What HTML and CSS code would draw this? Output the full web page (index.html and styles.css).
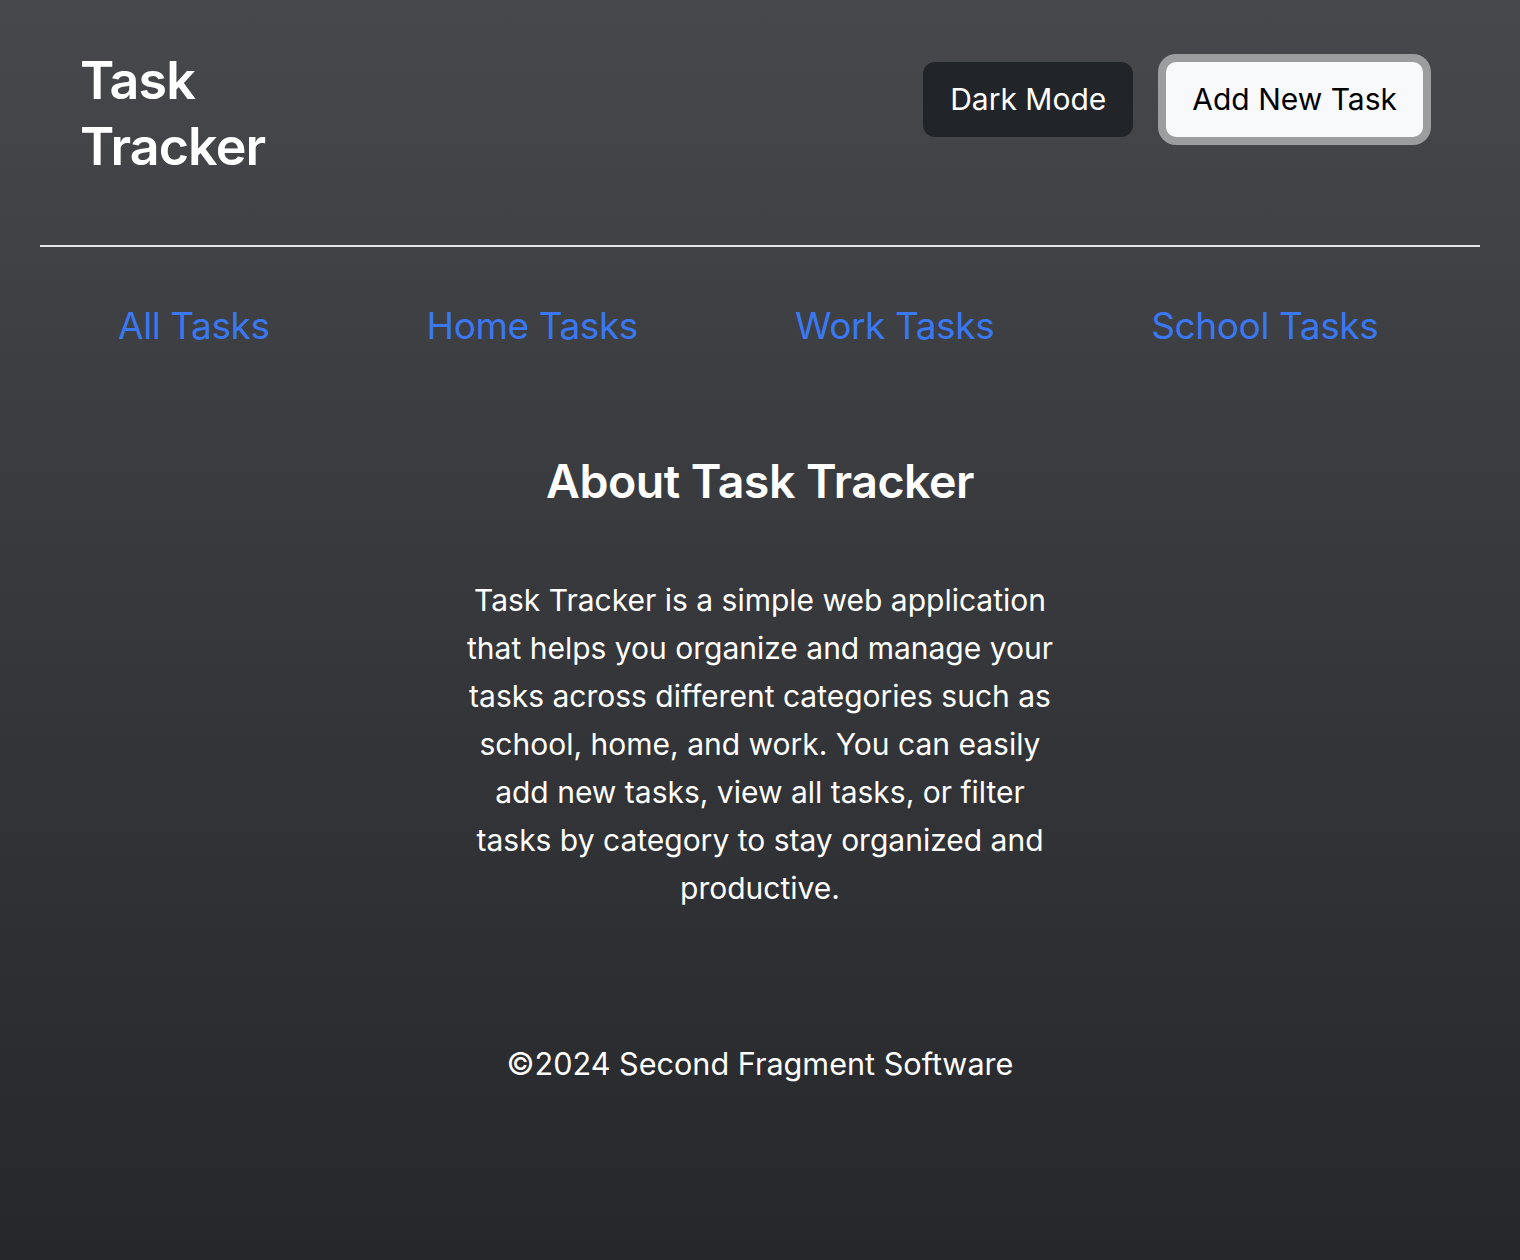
FILE: index.html
```html
<!DOCTYPE html>
<html lang="en">
<head>
<meta charset="utf-8">
<title>Task Tracker</title>
<link rel="stylesheet" href="styles.css">
</head>
<body>
<div class="app">
  <header class="header">
    <h1 class="brand">Task<br>Tracker</h1>
    <div class="actions">
      <button class="btn btn-dark">Dark Mode</button>
      <button class="btn btn-light">Add New Task</button>
    </div>
  </header>
  <hr class="divider">
  <nav class="nav">
    <a href="#" class="nav-link">All Tasks</a>
    <a href="#" class="nav-link">Home Tasks</a>
    <a href="#" class="nav-link">Work Tasks</a>
    <a href="#" class="nav-link">School Tasks</a>
  </nav>
  <main class="about">
    <h2 class="about-title">About Task Tracker</h2>
    <p class="about-text">Task Tracker is a simple web application that helps you organize and manage your tasks across different categories such as school, home, and work. You can easily add new tasks, view all tasks, or filter tasks by category to stay organized and productive.</p>
  </main>
  <footer class="footer">©2024 Second Fragment Software</footer>
</div>
</body>
</html>
```
FILE: styles.css
```css
* { box-sizing: border-box; }
html, body { margin: 0; padding: 0; }
body {
  min-height: 100vh;
  background: linear-gradient(180deg, #46484c 0%, #25272b 100%);
  font-family: Inter, "Noto Sans", sans-serif;
  color: #fff;
}
.app { padding: 0 40px; }
.header {
  display: flex;
  justify-content: space-between;
  align-items: flex-start;
  padding: 48px 57px 0 40px;
}
.brand {
  margin: 0;
  font-size: 52px;
  line-height: 66px;
  font-weight: 600;
  letter-spacing: -0.9px;
}
.actions {
  display: flex;
  gap: 33px;
  margin-top: 14px;
}
.btn {
  font-family: inherit;
  font-size: 30px;
  line-height: 43px;
  padding: 16px 27px;
  border-radius: 12px;
  border: none;
  cursor: pointer;
}
.btn-dark { background: #212529; color: #fff; }
.btn-light {
  background: #f8f9fa;
  color: #000;
  padding: 16px 26px;
  box-shadow: 0 0 0 8px #9c9d9f;
  border-radius: 10px;
}
.divider {
  margin: 65px 0 0;
  border: 0;
  border-top: 2px solid #e2e3e5;
}
.nav {
  display: flex;
  gap: 157px;
  padding: 55px 0 0 78px;
}
.nav-link {
  color: #3a78f2;
  text-decoration: none;
  font-size: 37px;
  line-height: 48px;
  letter-spacing: -0.4px;
}
.about {
  text-align: center;
  padding-top: 102px;
}
.about-title {
  margin: 0;
  font-size: 46.5px;
  line-height: 58px;
  font-weight: 600;
  letter-spacing: -0.5px;
}
.about-text {
  width: 610px;
  margin: 66px auto 0;
  font-size: 30px;
  line-height: 48px;
}
.footer {
  text-align: center;
  font-size: 30.6px;
  line-height: 48px;
  padding-top: 128px;
}
```
